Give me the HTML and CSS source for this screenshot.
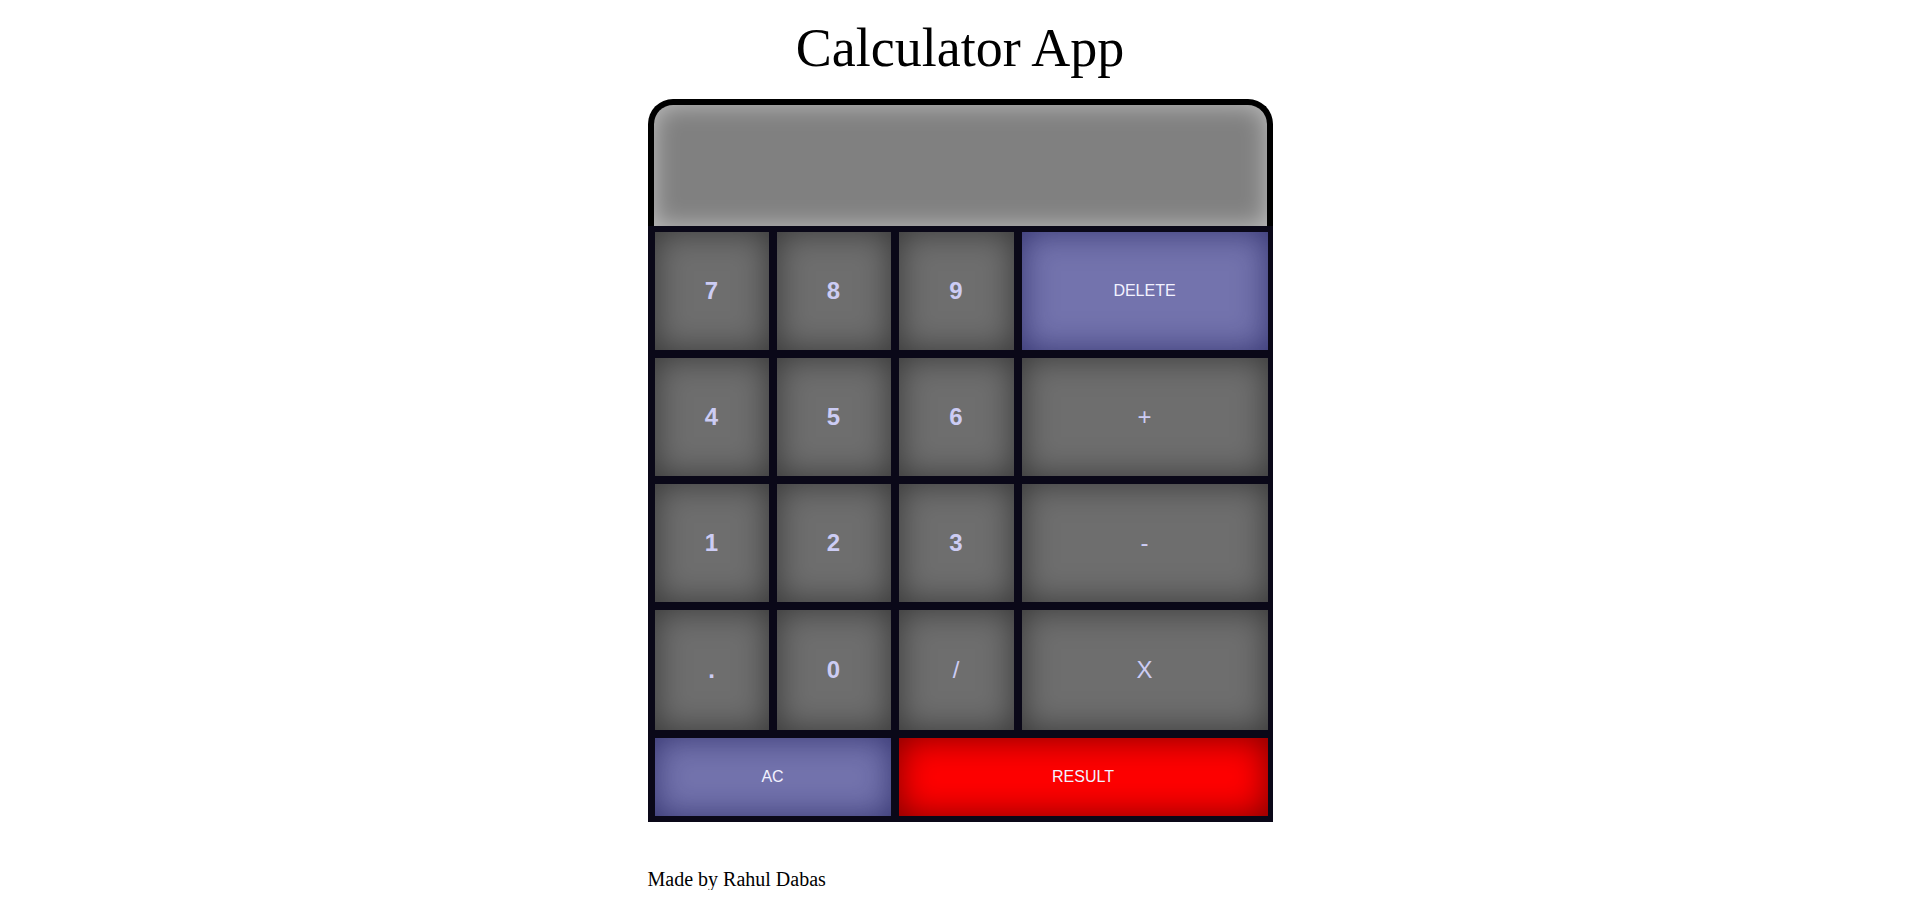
FILE: index.html
```html
<!DOCTYPE html>
<html lang="en">
<head>
<meta charset="utf-8">
<title>Calculator App</title>
<link rel="stylesheet" href="styles.css">
</head>
<body>
<h1 class="title">Calculator App</h1>
<main class="wrap">
  <div class="calc">
    <div class="display"></div>
    <div class="keypad">
      <button class="key num">7</button>
      <button class="key num">8</button>
      <button class="key num">9</button>
      <button class="key accent small">DELETE</button>
      <button class="key num">4</button>
      <button class="key num">5</button>
      <button class="key num">6</button>
      <button class="key op">+</button>
      <button class="key num">1</button>
      <button class="key num">2</button>
      <button class="key num">3</button>
      <button class="key op">-</button>
      <button class="key num">.</button>
      <button class="key num">0</button>
      <button class="key op">/</button>
      <button class="key op">X</button>
      <button class="key accent small span2">AC</button>
      <button class="key result small span2">RESULT</button>
    </div>
  </div>
  <p class="credit">Made by Rahul Dabas</p>
</main>
</body>
</html>
```
FILE: styles.css
```css
html, body {
  margin: 0;
  padding: 0;
  background: #ffffff;
}

body {
  font-family: "Liberation Serif", "Times New Roman", serif;
  color: #000;
}

.title {
  margin: 18px 0 21px;
  font-size: 54px;
  font-weight: 400;
  text-align: center;
  line-height: 60px;
}

.wrap {
  width: 625px;
  margin: 0 auto;
}

.calc {
  display: flex;
  flex-direction: column;
}

.display {
  box-sizing: border-box;
  height: 127px;
  border: 6px solid #000;
  border-bottom: none;
  border-radius: 25px 25px 0 0;
  background: #808080;
  box-shadow: inset 0 0 24px rgba(255, 255, 255, 0.5);
}

.keypad {
  display: grid;
  grid-template-columns: 114px 114px 115px 1fr;
  grid-template-rows: 118px 118px 118px 120px 78px;
  column-gap: 8px;
  row-gap: 8px;
  padding: 6px 5px 6px 7px;
  background: #0a0818;
}

.key {
  display: flex;
  align-items: center;
  justify-content: center;
  margin: 0;
  padding: 0;
  border: none;
  font-family: "Liberation Sans", Arial, sans-serif;
  font-size: 24px;
  color: #ccccf4;
  background: #6e6e6e;
  box-shadow: inset 0 0 32px rgba(0, 0, 0, 0.5);
}

.num {
  font-weight: 700;
}

.op {
  font-weight: 400;
}

.small {
  font-size: 16px;
  font-weight: 400;
  color: #f2f2ff;
}

.accent {
  background: #7373ad;
  box-shadow: inset 0 0 32px rgba(20, 20, 80, 0.65);
}

.result {
  background: #ff0000;
  box-shadow: inset 0 0 34px rgba(90, 0, 0, 0.8);
}

.span2 {
  grid-column: span 2;
}

.credit {
  margin: 46px 0 0;
  font-size: 20px;
  line-height: 22px;
}
```
